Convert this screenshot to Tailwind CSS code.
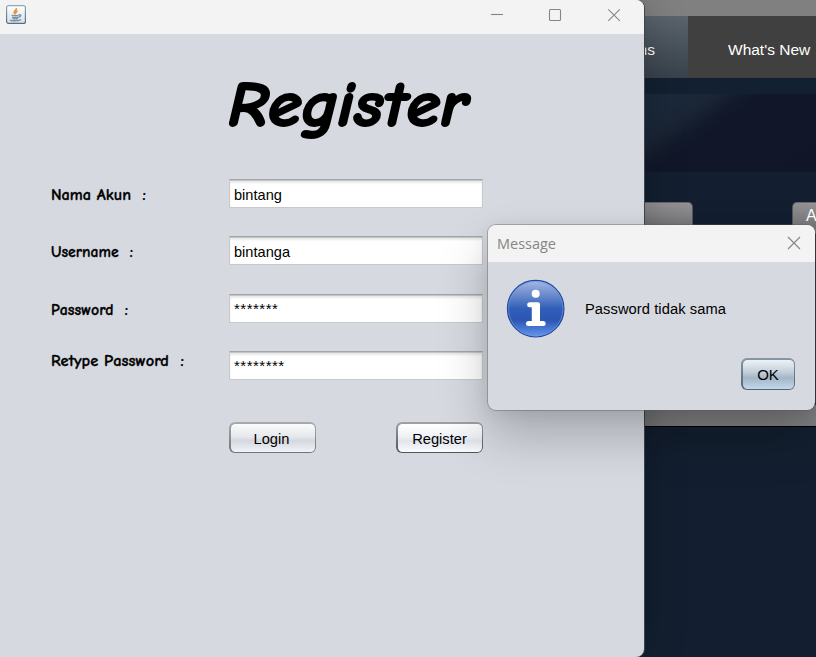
<!DOCTYPE html>
<html lang="id">
<head>
<meta charset="utf-8">
<title>Register</title>
<script src="https://cdn.jsdelivr.net/npm/@tailwindcss/browser@4"></script>
</head>
<body class="relative w-[816px] h-[657px] overflow-hidden bg-[#131f30] font-['Liberation_Sans',Arial,sans-serif] text-black">

<!-- Main application behind the windows -->
<div class="absolute left-[600px] top-0 w-[216px] h-[657px] flex flex-col overflow-hidden bg-[#131f30]">
  <div class="h-4 shrink-0 bg-[#808080]"></div>
  <nav class="h-[62px] shrink-0 flex text-[15.5px] leading-none text-white bg-[#404040]">
    <div class="w-[88px] flex items-center justify-end pr-[33px] pt-[5px] bg-linear-to-b from-[#5b646c] to-[#38424c] whitespace-nowrap">Items</div>
    <div class="flex items-center pl-10 pt-[5px] whitespace-nowrap">What's New</div>
  </nav>
  <div class="h-4 shrink-0 bg-[#132031]"></div>
  <div class="h-[78px] shrink-0 bg-[linear-gradient(145deg,#1c2b3c_0%,#1b283a_28%,#1a2434_36%,#121a2a_45%,#111729_50%,#111528_100%)]"></div>
  <div class="h-[233px] shrink-0 flex justify-between pt-[30px]">
    <div class="w-[93px] h-[32px] rounded-[5px] border-[1.5px] border-[#55575a] border-t-[#68696b] bg-linear-to-b from-[#929294] to-[#707072]"></div>
    <div class="w-[24px] h-[32px] pl-[13px] pt-[3px] rounded-l-[5px] border-[1.5px] border-r-0 border-[#55575a] border-t-[#68696b] bg-linear-to-b from-[#929294] to-[#707072] text-white text-base leading-[20px] overflow-hidden">A</div>
  </div>
  <div class="h-[21px] shrink-0 bg-[#808183]"></div>
  <div class="h-px shrink-0 bg-black"></div>
  <div class="grow bg-[#131f30]"></div>
</div>

<!-- Register window -->
<section class="absolute left-0 top-0 w-[644px] h-[657px] flex flex-col rounded-r-[8px] overflow-hidden bg-[#d6d9e0] shadow-[1px_0_0_#3d454f,0_0_40px_rgba(0,0,0,0.25)]">
  <header class="h-[34px] shrink-0 flex items-start justify-between bg-[#f3f3f3] pl-[6px] pt-[5px] pr-[23px]">
    <svg width="20" height="20" viewBox="0 0 20 20" fill="none">
      <defs><linearGradient id="jb" x2="0" y2="1"><stop stop-color="#8daabd"/><stop offset="1" stop-color="#4f6f88"/></linearGradient><linearGradient id="jf" x2="0" y2="1"><stop stop-color="#fff"/><stop offset="1" stop-color="#dedfe1"/></linearGradient></defs>
      <rect x=".6" y=".6" width="18.8" height="17.8" rx="2" fill="url(#jf)" stroke="url(#jb)" stroke-width="1.2"/>
      <path d="M10.300 3.200c.8 1.800-2.500 2.300-2 4.300.2.900.8 1.300 1 2M11.500 5.800c-1.700.8-2 1.700-1.200 2.800" stroke="#ed9143" stroke-width="1.700"/>
      <path d="M5.500 10c1.500.8 6 .8 7.500 0M6 11.800c1.500.8 5 .8 6.500 0M6.500 13.300c1.500.6 4 .6 5.500 0M13 9.800c2.500-.5 2.500 1.800-.3 2.300M4 14.800c1 1.400 9.500 1.200 11-.2" stroke="#7893a8" stroke-width="1.400"/>
    </svg>
    <svg width="131" height="20" viewBox="490 5 131 20" fill="none" stroke="#858585" stroke-width="1.100">
      <path d="M491 14.500h12"/><rect x="549.500" y="9.500" width="11" height="11" rx="1"/><path d="M608.300 9.300l11.500 11.500M619.800 9.300l-11.500 11.500"/>
    </svg>
  </header>

  <div class="pl-[220px] h-[145px] shrink-0 pt-5">
    <svg width="290" height="115" viewBox="220 54 290 115" class="block overflow-visible">
      <text x="228" y="126" textLength="240" lengthAdjust="spacingAndGlyphs" font-family="'Comic Sans MS','Comic Neue',Lato,sans-serif" font-size="64" font-weight="700" font-style="italic" stroke="#000" stroke-width="2" stroke-linejoin="round">Register</text>
    </svg>
  </div>

  <form class="flex flex-col pl-[50px]">
    <div class="h-[57px] flex items-start">
      <svg width="179" height="30" class="shrink-0 block"><text x="1" y="21" textLength="95" font-family="'Comic Sans MS','Comic Neue',Lato,sans-serif" font-size="16" font-weight="700" lengthAdjust="spacingAndGlyphs" stroke="#000" stroke-width=".3">Nama Akun&#160; :</text></svg>
      <div class="w-[254px] h-[29px] flex items-center pl-[4px] pt-[3px] text-[14.6px] leading-none bg-white border border-[#c7c9cd] border-t-[#a3a5a9] shadow-[inset_0_1px_0_#c4c5c6,inset_0_3px_2px_#e9e9e9]">bintang</div>
    </div>
    <div class="h-[58px] flex items-start">
      <svg width="179" height="30" class="shrink-0 block"><text x="1" y="21" textLength="82" font-family="'Comic Sans MS','Comic Neue',Lato,sans-serif" font-size="16" font-weight="700" lengthAdjust="spacingAndGlyphs" stroke="#000" stroke-width=".3">Username&#160; :</text></svg>
      <div class="w-[254px] h-[29px] flex items-center pl-[4px] pt-[3px] text-[14.6px] leading-none bg-white border border-[#c7c9cd] border-t-[#a3a5a9] shadow-[inset_0_1px_0_#c4c5c6,inset_0_3px_2px_#e9e9e9]">bintanga</div>
    </div>
    <div class="h-[57px] flex items-start">
      <svg width="179" height="30" class="shrink-0 block"><text x="1" y="21" textLength="77" font-family="'Comic Sans MS','Comic Neue',Lato,sans-serif" font-size="16" font-weight="700" lengthAdjust="spacingAndGlyphs" stroke="#000" stroke-width=".3">Password&#160; :</text></svg>
      <div class="w-[254px] h-[29px] flex items-center pl-[4px] text-[15px] leading-none tracking-[0.5px] bg-white border border-[#c7c9cd] border-t-[#a3a5a9] shadow-[inset_0_1px_0_#c4c5c6,inset_0_3px_2px_#e9e9e9]">*******</div>
    </div>
    <div class="h-[71px] flex items-start">
      <svg width="179" height="30" class="shrink-0 block"><text x="1" y="15" textLength="133" font-family="'Comic Sans MS','Comic Neue',Lato,sans-serif" font-size="16" font-weight="700" lengthAdjust="spacingAndGlyphs" stroke="#000" stroke-width=".3">Retype Password&#160; :</text></svg>
      <div class="w-[254px] h-[29px] flex items-center pl-[4px] text-[15px] leading-none tracking-[0.5px] bg-white border border-[#c7c9cd] border-t-[#a3a5a9] shadow-[inset_0_1px_0_#c4c5c6,inset_0_3px_2px_#e9e9e9]">********</div>
    </div>
    <div class="ml-[179px] w-[254px] flex justify-between text-[14.7px] leading-none">
      <div class="w-[87px] h-[31px] rounded-[6px] p-[1.5px] bg-linear-to-b from-[#a8abb0] to-[#70747c]"><div class="h-full flex items-center justify-center pt-[3px] pr-[2px] rounded-[4.5px] bg-[linear-gradient(#fbfbfc,#e6e8ec_45%,#d4d7de_60%,#f1f3f7)]">Login</div></div>
      <div class="w-[87px] h-[31px] rounded-[6px] p-[1.5px] bg-linear-to-b from-[#a0a2a7] to-[#50535b]"><div class="h-full flex items-center justify-center pt-[3px] rounded-[4.5px] bg-[linear-gradient(#fff,#eff1f5_45%,#e1e4ea_60%,#fbfcff)]">Register</div></div>
    </div>
  </form>
</section>

<!-- Message dialog -->
<section class="absolute left-[488px] top-[225px] w-[327px] h-[185px] flex flex-col rounded-[8px] overflow-hidden bg-[#d6d9e0] shadow-[0_0_0_1px_rgba(90,90,90,0.4),0_26px_50px_rgba(0,0,0,0.23),0_2px_18px_rgba(0,0,0,0.08)]">
  <header class="h-[37px] shrink-0 flex items-center justify-between pl-[9px] pr-[14px] bg-[#f3f3f3]">
    <svg width="70" height="24" class="block"><text x="0" y="17" textLength="59" lengthAdjust="spacingAndGlyphs" font-family="'Segoe UI','Open Sans','Noto Sans',sans-serif" font-size="15" fill="#858585">Message</text></svg>
    <svg width="14" height="14" viewBox="0 0 14 14" class="block -mt-px" fill="none" stroke="#858585" stroke-width="1.100"><path d="M1 1l12 12M13 1L1 13"/></svg>
  </header>
  <div class="h-[96px] shrink-0 flex items-start pl-[18px] pt-[17px]">
    <svg width="60" height="60" viewBox="506 279 60 60" class="shrink-0">
      <defs><linearGradient id="ig" x2="0" y2="1"><stop stop-color="#a5b9e5"/><stop offset=".25" stop-color="#6c8ccd"/><stop offset=".5" stop-color="#315fb8"/><stop offset=".7" stop-color="#2b56b2"/><stop offset="1" stop-color="#6797ee"/></linearGradient></defs>
      <circle cx="535.700" cy="308.700" r="28.300" fill="url(#ig)" stroke="#2148a0" stroke-width="1.100"/>
      <circle cx="535.700" cy="308.700" r="27.200" fill="none" stroke="#7599dc" stroke-opacity=".6"/>
      <circle cx="535.700" cy="293.800" r="4" fill="#fff"/>
      <path d="M529.500 302.200H538q2 0 2 2V321h3.300q2.400 0 2.400 2.500t-2.400 2.500h-15q-2.400 0-2.400-2.500t2.400-2.500h3.500v-13.800h-2.300q-2.400 0-2.400-2.500t2.400-2.500z" fill="#fff"/>
    </svg>
    <p class="pl-[19px] pt-[22px] text-[14.7px] leading-[17px] tracking-[0.07px] whitespace-nowrap">Password tidak sama</p>
  </div>
  <div class="flex justify-end pr-[20px]">
    <div class="w-[54px] h-[32px] rounded-[6px] p-[1.5px] bg-linear-to-b from-[#8697a7] to-[#4f6474]"><div class="h-full flex items-center justify-center pt-px rounded-[4.5px] bg-[linear-gradient(#eef2f6,#c6d0db_40%,#a4b6c7_62%,#c3d8eb)] text-[15px] leading-none">OK</div></div>
  </div>
</section>
</body>
</html>
